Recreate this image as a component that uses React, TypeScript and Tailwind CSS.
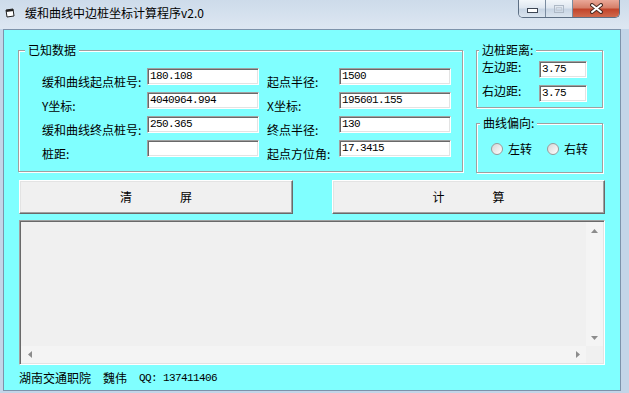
import { ReactNode } from 'react';

const cjk = "font-['Noto_Sans_CJK_SC',sans-serif]";
const mono = "font-['Liberation_Mono',monospace] text-[11px] tracking-[-0.6px]";
const sunken =
  'border border-t-[#a0a0a0] border-l-[#a0a0a0] border-r-white border-b-white shadow-[inset_1px_1px_0_#696969,inset_-1px_-1px_0_#e3e3e3]';
const raised =
  'border border-t-white border-l-white border-r-[#696969] border-b-[#696969] shadow-[inset_-1px_-1px_0_#a0a0a0,inset_1px_1px_0_#e3e3e3] bg-[#f0f0f0]';
const etched = 'border border-[#a0a0a0] shadow-[inset_1px_1px_0_#ffffff,1px_1px_0_#ffffff]';

const rows = [
  ['缓和曲线起点桩号:', '180.108', '起点半径:', '1500'],
  ['Y坐标:', '4040964.994', 'X坐标:', '195601.155'],
  ['缓和曲线终点桩号:', '250.365', '终点半径:', '130'],
  ['桩距:', '', '起点方位角:', '17.3415'],
];

function Field({ value, width }: { value: string; width: string }) {
  return (
    <input
      readOnly
      defaultValue={value}
      className={`${sunken} ${mono} ${width} h-[17px] bg-white pl-[2px] pb-[2px] text-black outline-none`}
    />
  );
}

// legend sits inside the fieldset's padding, so offsets are pulled back by it
function Legend({ children, offset }: { children: ReactNode; offset: string }) {
  return (
    <legend className={`${offset} bg-[#80ffff] px-[3px] text-[12px] leading-[14px]`}>
      {children}
    </legend>
  );
}

function Radio({ label }: { label: string }) {
  return (
    <label className="flex items-center">
      <span className="h-[12px] w-[12px] rounded-full border border-[#9a9a9a] bg-gradient-to-br from-[#d6d6d6] to-white" />
      <span className="ml-[5px] text-[12px] leading-[14px]">{label}</span>
    </label>
  );
}

function Arrow({ dir }: { dir: 'up' | 'down' | 'left' | 'right' }) {
  const points = {
    up: '0,4 3.5,0 7,4',
    down: '0,0 3.5,4 7,0',
    left: '4,0 0,3.5 4,7',
    right: '0,0 4,3.5 0,7',
  }[dir];
  const vertical = dir === 'up' || dir === 'down';
  return (
    <svg width={vertical ? 7 : 4} height={vertical ? 4 : 7} aria-hidden="true">
      <polygon points={points} fill="#8c8c8c" />
    </svg>
  );
}

export default function App() {
  return (
    <div
      className={`${cjk} flex h-[393px] w-[629px] flex-col overflow-hidden bg-[#c3d5e8] text-black`}
    >
      {/* title bar */}
      <div className="flex h-[29px] shrink-0 items-start bg-gradient-to-b from-[#cddbea] to-[#dde7f2]">
        <div className="flex items-center pl-[5px] pt-[6px]">
          <svg width="11" height="10" viewBox="0 0 11 10" aria-hidden="true">
            <path d="M1 2 L8 1 L9 8 L2 9 Z" fill="#fff" stroke="#222" strokeWidth="1" />
            <path d="M1 2 L8 1 L8.3 3 L1.3 4 Z" fill="#222" />
          </svg>
          <span className="ml-[9px] text-[12px] leading-[14px]">缓和曲线中边桩坐标计算程序v2.0</span>
        </div>
        <div className="ml-auto mr-[9px] flex h-[18px] overflow-hidden rounded-b-[5px] border border-t-0 border-[#5d6f84]">
          <div className="flex w-[27px] items-center justify-center border-r border-[#7b8ca0] bg-[linear-gradient(#f2f6fa,#dfe7f0_45%,#c8d5e4_55%,#dae4ee)] pt-[4px]">
            <svg width="11" height="5" aria-hidden="true">
              <rect x="0.5" y="0.5" width="10" height="4" fill="#fff" stroke="#3d4654" />
            </svg>
          </div>
          <div className="flex w-[27px] items-center justify-center border-r border-[#7b8ca0] bg-[linear-gradient(#f2f6fa,#dfe7f0_45%,#c8d5e4_55%,#dae4ee)]">
            <svg width="10" height="8" aria-hidden="true">
              <rect x="0.5" y="0.5" width="9" height="7" fill="none" stroke="#aeb9c6" />
              <rect x="2.5" y="2.5" width="5" height="3" fill="none" stroke="#c4ccd6" />
            </svg>
          </div>
          <div className="flex w-[46px] items-center justify-center bg-[linear-gradient(#eaa898,#d6806a_45%,#c2452b_55%,#d06a4e)]">
            <svg width="13" height="11" aria-hidden="true">
              <path d="M2 2 L11 9 M11 2 L2 9" stroke="#4a2a22" strokeWidth="4" strokeLinecap="round" />
              <path d="M2 2 L11 9 M11 2 L2 9" stroke="#fff" strokeWidth="2" strokeLinecap="round" />
            </svg>
          </div>
        </div>
      </div>

      {/* client area */}
      <div className="ml-[3px] mr-[8px] flex h-[362px] flex-col border border-[#7d93ab] bg-[#80ffff] px-[15px] pt-[13px]">
        <div className="flex items-start">
          <fieldset className={`${etched} -ml-px w-[445px] pb-[7px] pl-[23px] pt-[11px]`}>
            <Legend offset="-ml-[17px]">已知数据</Legend>
            {rows.map(([l1, v1, l2, v2]) => (
              <div key={l1} className="flex h-[24px] items-start text-[12px] leading-[14px]">
                <span className="mt-[7px] w-[105px] whitespace-nowrap">{l1}</span>
                <Field value={v1} width="w-[112px]" />
                <span className="ml-[8px] mt-[7px] w-[72px] whitespace-nowrap">{l2}</span>
                <Field value={v2} width="w-[112px]" />
              </div>
            ))}
          </fieldset>

          <div className="ml-[13px] flex flex-col">
            <fieldset className={`${etched} w-[127px] pb-[5px] pl-[5px] pt-[4px]`}>
              <Legend offset="-ml-[3px]">边桩距离:</Legend>
              <div className="flex flex-col gap-[7px] text-[12px] leading-[14px]">
                <div className="flex h-[17px] items-start">
                  <span className="-mt-[1px] w-[57px]">左边距:</span>
                  <Field value="3.75" width="w-[48px]" />
                </div>
                <div className="flex h-[17px] items-start">
                  <span className="-mt-[1px] w-[57px]">右边距:</span>
                  <Field value="3.75" width="w-[48px]" />
                </div>
              </div>
            </fieldset>
            <fieldset className={`${etched} mt-[8px] w-[127px] pb-[16px] pl-[14px] pt-[12px]`}>
              <Legend offset="-ml-[11px]">曲线偏向:</Legend>
              <div className="flex items-center gap-[15px]">
                <Radio label="左转" />
                <Radio label="右转" />
              </div>
            </fieldset>
          </div>
        </div>

        <div className="mt-[7px] grid grid-cols-[274px_273px] gap-x-[39px]">
          <button type="button" className={`${raised} h-[34px] text-[12px] leading-[14px]`}>
            清　　　　屏
          </button>
          <button type="button" className={`${raised} h-[34px] text-[12px] leading-[14px]`}>
            计　　　　算
          </button>
        </div>

        <div className={`${sunken} mt-[6px] flex h-[145px] flex-col bg-[#f0f0f0] p-px`}>
          <div className="flex flex-1">
            <div className="flex-1" />
            <div className="flex w-[17px] flex-col bg-[#f4f4f4]">
              <div className="flex h-[17px] items-center justify-center">
                <Arrow dir="up" />
              </div>
              <div className="flex-1" />
              <div className="flex h-[17px] items-center justify-center">
                <Arrow dir="down" />
              </div>
            </div>
          </div>
          <div className="flex h-[17px]">
            <div className="flex flex-1 bg-[#f4f4f4]">
              <div className="flex w-[17px] items-center justify-center">
                <Arrow dir="left" />
              </div>
              <div className="flex-1" />
              <div className="flex w-[17px] items-center justify-center">
                <Arrow dir="right" />
              </div>
            </div>
            <div className="w-[17px] bg-[#f0f0f0]" />
          </div>
        </div>

        <div className="mt-[6px] flex items-center text-[12px] leading-[14px]">
          <span>湖南交通职院</span>
          <span className="ml-[12px]">魏伟</span>
          <span className={`${mono} ml-[12px]`}>QQ: 137411406</span>
        </div>
      </div>
    </div>
  );
}
